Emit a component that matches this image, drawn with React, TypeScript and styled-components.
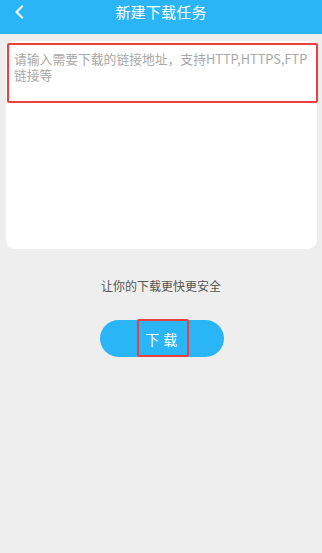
import React from "react";
import styled, { createGlobalStyle } from "styled-components";

const Global = createGlobalStyle`
  html, body { margin: 0; padding: 0; background: #eeeeee; }
  body { font-family: "Noto Sans CJK SC", "Noto Sans", sans-serif; }
  * { box-sizing: border-box; }
`;

const Page = styled.div`
  width: 322px;
  height: 553px;
  background: #eeeeee;
  display: flex;
  flex-direction: column;
`;

const Header = styled.div`
  height: 34px;
  background: #29b5f6;
  display: flex;
  align-items: flex-start;
  justify-content: center;
  position: relative;
`;

const BackButton = styled.div`
  position: absolute;
  left: 13px;
  top: 5px;
  width: 14px;
  height: 14px;
  display: flex;
`;

const Title = styled.div`
  color: #ffffff;
  font-size: 15px;
  line-height: 20px;
  margin-top: 2px;
  letter-spacing: 0.2px;
`;

const Card = styled.div`
  margin: 7px 5px 0 6px;
  height: 208px;
  background: #ffffff;
  border-radius: 9px;
  position: relative;
`;

const InputText = styled.div`
  padding: 10px 8px 0 8px;
  color: #a8a8a8;
  font-size: 12.8px;
  line-height: 16px;
`;

const Highlight = styled.div<{ $l: number; $t: number; $w: number; $h: number }>`
  position: absolute;
  left: ${(p) => p.$l}px;
  top: ${(p) => p.$t}px;
  width: ${(p) => p.$w}px;
  height: ${(p) => p.$h}px;
  border: 2px solid #ec4040;
  border-radius: 2px;
  pointer-events: none;
`;

const Slogan = styled.div`
  margin-top: 29px;
  text-align: center;
  color: #555555;
  font-size: 12px;
  line-height: 16px;
`;

const ButtonRow = styled.div`
  margin-top: 26px;
  display: flex;
  justify-content: center;
  padding-left: 1px;
`;

const DownloadButton = styled.div`
  width: 124px;
  height: 37px;
  border-radius: 19px;
  background: #29b5f6;
  color: #ffffff;
  font-size: 14px;
  display: flex;
  align-items: center;
  justify-content: center;
  position: relative;
  letter-spacing: 0.5px;
  white-space: pre;
`;

export default function App() {
  return (
    <>
      <Global />
      <Page>
        <Header>
          <BackButton>
            <svg width="14" height="14" viewBox="0 0 14 14">
              <path d="M9 1.5 L3.5 7 L9 12.5" fill="none" stroke="#fff" strokeWidth="2" strokeLinecap="square" />
            </svg>
          </BackButton>
          <Title>新建下载任务</Title>
        </Header>
        <Card>
          <InputText>请输入需要下载的链接地址，支持HTTP,HTTPS,FTP链接等</InputText>
          <Highlight $l={1} $t={2} $w={311} $h={60} />
        </Card>
        <Slogan>让你的下载更快更安全</Slogan>
        <ButtonRow>
          <DownloadButton>
            下 载
            <Highlight $l={37} $t={-1} $w={52} $h={38} />
          </DownloadButton>
        </ButtonRow>
      </Page>
    </>
  );
}
